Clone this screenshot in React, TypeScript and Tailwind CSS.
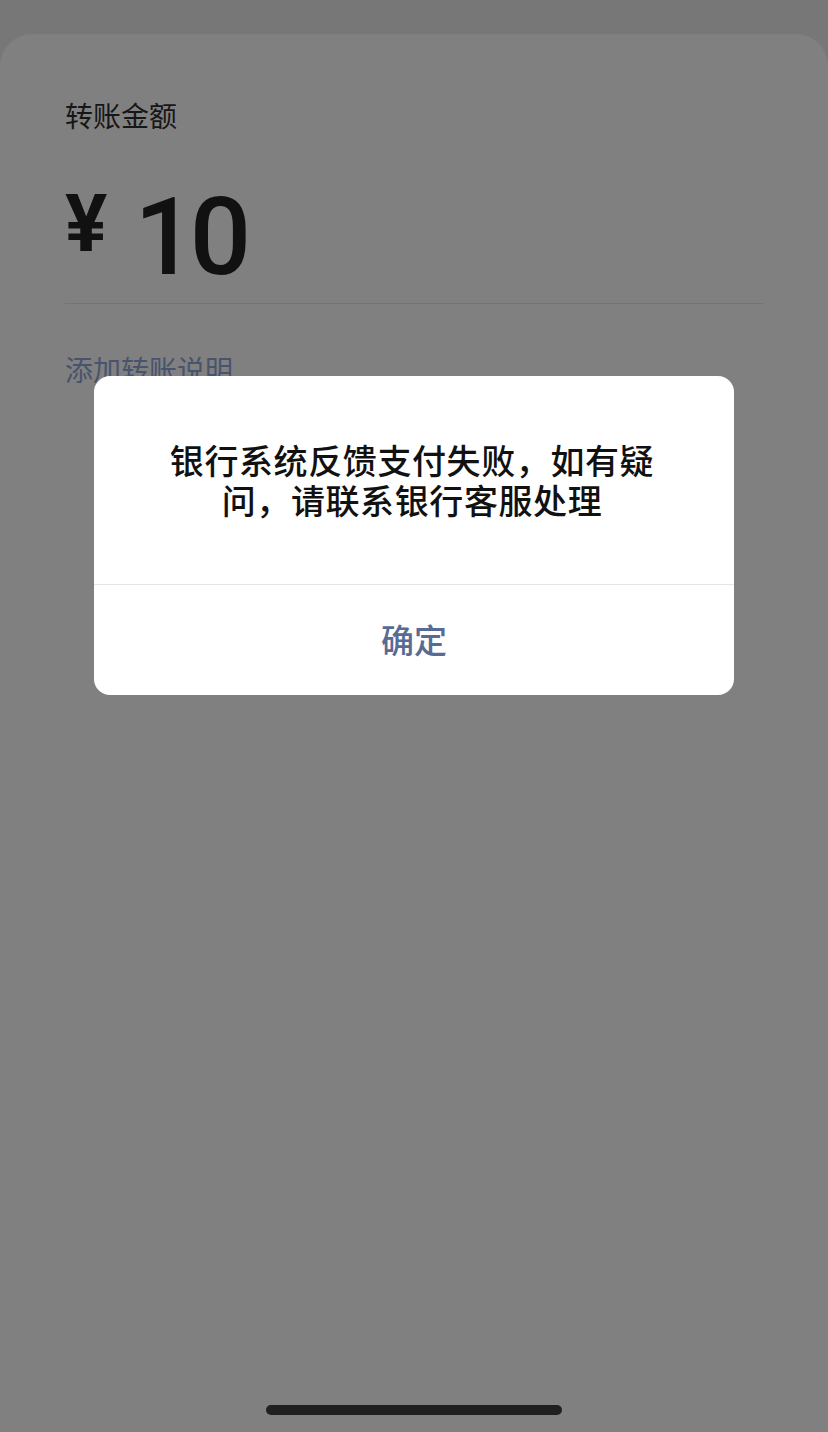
const cjk = "font-['Noto_Sans_CJK_SC','Noto_Sans',sans-serif]"

function FailDialog() {
  return (
    <div className="absolute inset-0 flex items-start justify-center pt-[376px]">
      <div className="w-[640px] rounded-[16px] bg-white overflow-hidden">
        <div className={`h-[208px] flex items-center justify-center pl-[68px] pr-[72px] text-center text-[34px] leading-[40px] tracking-[0.6px] font-medium text-[#111] ${cjk}`}>
          银行系统反馈支付失败，如有疑问，请联系银行客服处理
        </div>
        <div className="h-px bg-[#e5e5e5]" />
        <button
          type="button"
          className={`w-full h-[110px] flex items-center justify-center text-[33px] font-medium text-[#576b95] ${cjk}`}
        >
          确定
        </button>
      </div>
    </div>
  )
}

export default function App() {
  return (
    <div className="relative h-[1432px] w-[828px] bg-[#777777] flex flex-col pt-[34px] overflow-hidden">
      <div className="flex-1 flex flex-col rounded-t-[32px] bg-[#808080] px-[65px] pt-[62px]">
        <div className={`text-[28px] leading-[38px] text-[#161616] ${cjk}`}>转账金额</div>

        {/* amount */}
        <div className="mt-[49px] flex items-start h-[116px] font-['Roboto',sans-serif] text-[#111]">
          <span className="mt-[2px] text-[79px] font-bold leading-none">¥</span>
          <span className="ml-[27px] text-[108px] font-medium leading-none tracking-[-6px]">10</span>
        </div>

        <div className="mt-[4px] h-px bg-[#747474]" />

        <div className={`mt-[46px] text-[28px] leading-[38px] text-[#48536d] ${cjk}`}>添加转账说明</div>

        <div className="mt-auto mb-[17px] self-center w-[296px] h-[10px] rounded-full bg-[#202020]" />
      </div>
      <FailDialog />
    </div>
  )
}
